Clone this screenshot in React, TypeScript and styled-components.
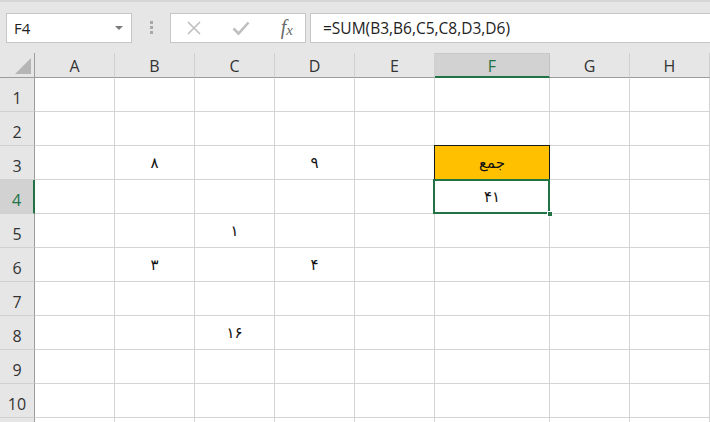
import { styled, createGlobalStyle } from "styled-components";

const GlobalStyle = createGlobalStyle`
	html, body {
		margin: 0;
		padding: 0;
		background: #ffffff;
		overflow: hidden;
	}
	* {
		box-sizing: border-box;
	}
`;

const columns = [
	{ name: "A", width: 80 },
	{ name: "B", width: 80 },
	{ name: "C", width: 80 },
	{ name: "D", width: 80 },
	{ name: "E", width: 80 },
	{ name: "F", width: 115 },
	{ name: "G", width: 80 },
	{ name: "H", width: 80 },
];

const values: Record<string, string> = {
	B3: "۸",
	D3: "۹",
	F3: "جمع",
	F4: "۴۱",
	C5: "۱",
	B6: "۳",
	D6: "۴",
	C8: "۱۶",
};

// row 11 only peeks in at the bottom edge, so it has no label
const rows = [1, 2, 3, 4, 5, 6, 7, 8, 9, 10, 11];
const activeCol = "F";
const activeRow = 4;

const App = () => {
	return (
		<>
			<GlobalStyle />
			<Page>
				<Toolbar>
					<NameBox>
						<span>F4</span>
						<DropArrow />
					</NameBox>
					<Grip>
						<i />
						<i />
						<i />
					</Grip>
					<FormulaButtons>
						<IconBtn>
							<svg width="16" height="16" viewBox="0 0 16 16">
								<path d="M2 2 L14 14 M14 2 L2 14" stroke="#bfbfbf" strokeWidth="1.6" fill="none" />
							</svg>
						</IconBtn>
						<IconBtn>
							<svg width="18" height="16" viewBox="0 0 18 16">
								<path d="M1.5 8.5 L6.5 13.5 L16.5 2.5" stroke="#bfbfbf" strokeWidth="2.6" fill="none" />
							</svg>
						</IconBtn>
						<Fx>
							f<sub>x</sub>
						</Fx>
					</FormulaButtons>
					<FormulaInput>=SUM(B3,B6,C5,C8,D3,D6)</FormulaInput>
				</Toolbar>
				<Sheet $cols={columns.map(c => `${c.width}px`).join(" ")}>
					<Corner>
						<svg width="16" height="16" viewBox="0 0 16 16">
							<polygon points="16,0 16,16 0,16" fill="#b5b5b5" />
						</svg>
					</Corner>
					{columns.map(col => (
						<ColHead key={col.name} $active={col.name === activeCol}>
							{col.name}
						</ColHead>
					))}
					{rows.map(row => (
						<RowGroup key={row} row={row} />
					))}
				</Sheet>
			</Page>
		</>
	);
};

const RowGroup = ({ row }: { row: number }) => (
	<>
		<RowHead $active={row === activeRow}>{row <= 10 ? row : ""}</RowHead>
		{columns.map(col => {
			const ref = `${col.name}${row}`;
			return (
				<Cell key={ref} $highlight={ref === "F3"} $selected={ref === "F4"}>
					{values[ref]}
					{ref === "F4" && <FillHandle />}
				</Cell>
			);
		})}
	</>
);

const Page = styled.div`
	width: 710px;
	height: 422px;
	overflow: hidden;
	display: flex;
	flex-direction: column;
	background: #ffffff;
`;

const Toolbar = styled.div`
	height: 53px;
	flex: none;
	display: flex;
	align-items: center;
	padding: 0 0 0 6px;
	background: #e6e6e6;
	border-top: 2px solid #d6d6d6;
`;

const NameBox = styled.div`
	width: 126px;
	height: 30px;
	display: flex;
	align-items: center;
	justify-content: space-between;
	padding: 0 8px 0 7px;
	background: #ffffff;
	border: 1px solid #c6c6c6;
	font-family: "Open Sans", "Noto Sans", sans-serif;
	font-size: 15px;
	color: #222222;
`;

const DropArrow = styled.span`
	width: 0;
	height: 0;
	border-left: 4px solid transparent;
	border-right: 4px solid transparent;
	border-top: 4px solid #7a7a7a;
`;

const Grip = styled.div`
	width: 38px;
	display: flex;
	flex-direction: column;
	align-items: center;
	gap: 2px;

	i {
		width: 3px;
		height: 3px;
		background: #a8a8a8;
	}
`;

const FormulaButtons = styled.div`
	width: 136px;
	height: 30px;
	display: flex;
	align-items: center;
	justify-content: space-between;
	padding: 0 12px 0 15px;
	background: #ffffff;
	border: 1px solid #c6c6c6;
`;

const IconBtn = styled.span`
	display: flex;
	align-items: center;
`;

const Fx = styled.span`
	font-family: "Liberation Serif", serif;
	font-style: italic;
	font-size: 20px;
	color: #6a6a6a;
	line-height: 1;

	sub {
		font-size: 15px;
		vertical-align: -1px;
	}
`;

const FormulaInput = styled.div`
	flex: 1;
	height: 30px;
	margin-left: 4px;
	display: flex;
	align-items: center;
	padding-left: 12px;
	background: #ffffff;
	border: 1px solid #c6c6c6;
	border-right: none;
	font-family: "Open Sans", "Noto Sans", sans-serif;
	font-size: 15.5px;
	color: #222222;
`;

const Sheet = styled.div<{ $cols: string }>`
	display: grid;
	grid-template-columns: 35px ${p => p.$cols};
	grid-auto-rows: 34px;
	grid-template-rows: 25px;
`;

const Corner = styled.div`
	background: #e6e6e6;
	border-right: 1px solid #9c9c9c;
	border-bottom: 1px solid #9c9c9c;
	display: flex;
	align-items: flex-end;
	justify-content: flex-end;
	padding: 0 3px 3px 0;
`;

const ColHead = styled.div<{ $active: boolean }>`
	display: flex;
	align-items: center;
	justify-content: center;
	padding-top: 2px;
	background: ${p => (p.$active ? "#d2d2d2" : "#e6e6e6")};
	border-right: 1px solid ${p => (p.$active ? "#c2c2c2" : "#d0d0d0")};
	border-bottom: ${p => (p.$active ? "2px solid #217346" : "1px solid #9c9c9c")};
	border-top: ${p => (p.$active ? "1px solid #c8c8c8" : "none")};
	font-family: "Open Sans", "Noto Sans", sans-serif;
	font-size: 16px;
	color: ${p => (p.$active ? "#217346" : "#333333")};
`;

const RowHead = styled.div<{ $active: boolean }>`
	display: flex;
	align-items: flex-end;
	justify-content: center;
	padding-bottom: 2px;
	background: ${p => (p.$active ? "#d2d2d2" : "#e6e6e6")};
	border-right: ${p => (p.$active ? "2px solid #217346" : "1px solid #9c9c9c")};
	border-bottom: 1px solid #d0d0d0;
	font-family: "Open Sans", "Noto Sans", sans-serif;
	font-size: 16px;
	color: ${p => (p.$active ? "#217346" : "#333333")};
`;

const Cell = styled.div<{ $highlight: boolean; $selected: boolean }>`
	position: relative;
	display: flex;
	align-items: center;
	justify-content: center;
	padding-top: 1px;
	background: ${p => (p.$highlight ? "#ffc000" : "#ffffff")};
	border-right: 1px solid #d4d4d4;
	border-bottom: 1px solid #d4d4d4;
	font-family: "DejaVu Sans", sans-serif;
	font-size: 15px;
	color: #111111;

	${p =>
		p.$highlight &&
		`
		&::before {
			content: "";
			position: absolute;
			left: -1px;
			top: -1px;
			right: -1px;
			bottom: -1px;
			border: 1px solid #1a1a1a;
			pointer-events: none;
		}
	`}

	${p =>
		p.$selected &&
		`
		&::after {
			content: "";
			position: absolute;
			left: -2px;
			top: -1px;
			right: -1px;
			bottom: -1px;
			border: 2px solid #217346;
			pointer-events: none;
		}
	`}
`;

const FillHandle = styled.span`
	position: absolute;
	right: -4px;
	bottom: -4px;
	width: 6px;
	height: 6px;
	background: #217346;
	border: 1px solid #ffffff;
	z-index: 2;
`;

export default App;
